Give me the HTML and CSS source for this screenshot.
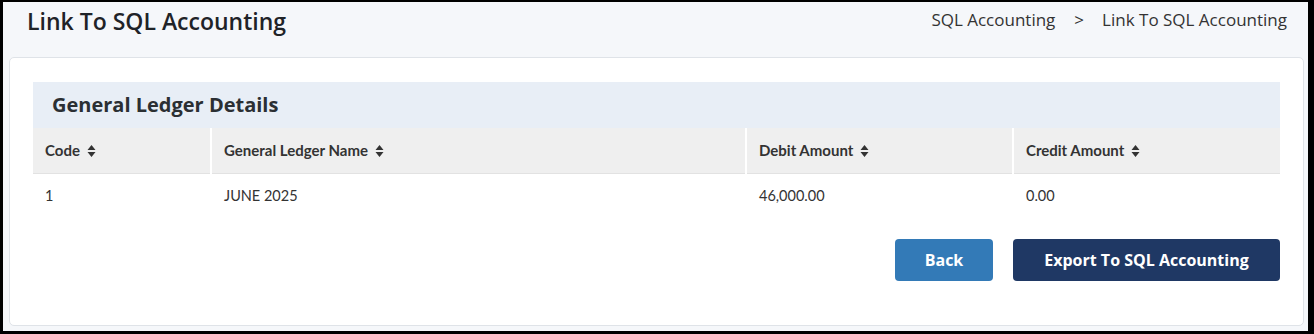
FILE: index.html
```html
<!DOCTYPE html>
<html lang="en">
<head>
  <meta charset="UTF-8" />
  <title>Link To SQL Accounting</title>
  <link rel="stylesheet" href="styles.css">
</head>
<body>
  <div class="page">
    <div class="page-header">
      <h1 class="page-title">Link To SQL Accounting</h1>
      <div class="breadcrumb">
        <span>SQL Accounting</span>
        <span class="sep">&gt;</span>
        <span>Link To SQL Accounting</span>
      </div>
    </div>

    <div class="card">
      <div class="panel-title">General Ledger Details</div>
      <table class="ledger">
        <thead>
          <tr>
            <th class="col-code">Code <svg class="sort" viewBox="0 0 8 12"><path d="M4 0 L8 5 H0 Z M0 7 H8 L4 12 Z"/></svg></th>
            <th class="col-name">General Ledger Name <svg class="sort" viewBox="0 0 8 12"><path d="M4 0 L8 5 H0 Z M0 7 H8 L4 12 Z"/></svg></th>
            <th class="col-debit">Debit Amount <svg class="sort" viewBox="0 0 8 12"><path d="M4 0 L8 5 H0 Z M0 7 H8 L4 12 Z"/></svg></th>
            <th class="col-credit">Credit Amount <svg class="sort" viewBox="0 0 8 12"><path d="M4 0 L8 5 H0 Z M0 7 H8 L4 12 Z"/></svg></th>
          </tr>
        </thead>
        <tbody>
          <tr>
            <td>1</td>
            <td>JUNE 2025</td>
            <td>46,000.00</td>
            <td>0.00</td>
          </tr>
        </tbody>
      </table>
      <div class="actions">
        <button class="btn btn-back">Back</button>
        <button class="btn btn-export">Export To SQL Accounting</button>
      </div>
    </div>
  </div>
</body>
</html>
```

FILE: styles.css
```css
html, body {
  margin: 0;
  padding: 0;
  background: #000;
}
body {
  padding: 2px 6px 3px 3px;
  font-family: "Open Sans", Arial, sans-serif;
  color: #212529;
}
.page {
  background: #f5f7fa;
  height: 329px;
  box-sizing: border-box;
  padding: 0 4px 5px 6px;
  display: flex;
  flex-direction: column;
}
.page-header {
  display: flex;
  justify-content: space-between;
  align-items: flex-start;
  height: 55px;
  padding: 0 17px 0 18px;
}
.page-title {
  margin: 3px 0 0;
  font-size: 23px;
  font-weight: 600;
  color: #1f2328;
}
.breadcrumb {
  margin-top: 6px;
  font-size: 17px;
  color: #333;
  display: flex;
}
.breadcrumb .sep {
  margin: 0 18px 0 19px;
}
.card {
  flex: 1;
  background: #fff;
  border: 1px solid #dfe3e8;
  border-radius: 5px;
  padding: 24px 23px 0 23px;
}
.panel-title {
  background: #e8eef6;
  height: 46px;
  line-height: 46px;
  padding-left: 19px;
  font-size: 20px;
  font-weight: 700;
  color: #2b2f33;
}
.ledger {
  width: 100%;
  border-collapse: collapse;
  font-family: Lato, "Open Sans", sans-serif;
  font-size: 14.5px;
  color: #333;
}
.ledger th {
  background: #efefef;
  text-align: left;
  font-size: 15px;
  font-weight: 700;
  height: 43px;
  padding: 0 12px 2px;
  border-left: 2px solid #fff;
  border-bottom: 1px solid #e2e2e2;
  white-space: nowrap;
}
.ledger th:first-child {
  border-left: none;
}
.ledger td {
  height: 43px;
  padding: 0 12px 2px;
  border-left: 2px solid #fff;
}
.ledger td:first-child {
  border-left: none;
}
.col-code { width: 153px; }
.col-name { width: 509px; }
.col-debit { width: 241px; }
.sort {
  width: 9px;
  height: 12px;
  margin-left: 3px;
  vertical-align: -1px;
  fill: #333;
}
.actions {
  display: flex;
  justify-content: flex-end;
  gap: 20px;
  margin-top: 20px;
}
.btn {
  height: 42px;
  border: none;
  border-radius: 4px;
  color: #fff;
  font-family: "Open Sans", Arial, sans-serif;
  font-size: 16px;
  font-weight: 700;
}
.btn-back {
  width: 98px;
  background: #337ab7;
}
.btn-export {
  width: 267px;
  background: #1f3864;
}
```
